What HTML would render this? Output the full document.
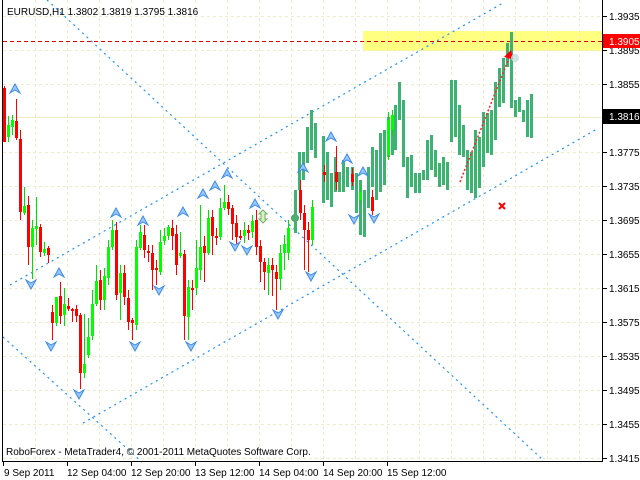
<!DOCTYPE html>
<html><head><meta charset="utf-8"><style>
html,body{margin:0;padding:0;background:#fff;width:640px;height:480px;overflow:hidden}
svg{display:block}
text{font-family:"Liberation Sans",sans-serif;font-size:10px;fill:#000}
</style></head><body>
<svg width="640" height="480" viewBox="0 0 640 480" xmlns="http://www.w3.org/2000/svg" shape-rendering="crispEdges">
<rect width="640" height="480" fill="#fff"/>
<rect x="363" y="31" width="239" height="20" fill="#ffff80"/>
<g stroke="#efebcc" stroke-width="1" stroke-dasharray="3,3">
<line x1="3" y1="16.5" x2="602" y2="16.5"/><line x1="3" y1="50.5" x2="602" y2="50.5"/><line x1="3" y1="84.5" x2="602" y2="84.5"/><line x1="3" y1="152.5" x2="602" y2="152.5"/><line x1="3" y1="186.5" x2="602" y2="186.5"/><line x1="3" y1="220.5" x2="602" y2="220.5"/><line x1="3" y1="254.5" x2="602" y2="254.5"/><line x1="3" y1="288.5" x2="602" y2="288.5"/><line x1="3" y1="322.5" x2="602" y2="322.5"/><line x1="3" y1="356.5" x2="602" y2="356.5"/><line x1="3" y1="390.5" x2="602" y2="390.5"/><line x1="3" y1="424.5" x2="602" y2="424.5"/><line x1="3" y1="458.5" x2="602" y2="458.5"/>
<line x1="35.5" y1="0" x2="35.5" y2="462"/><line x1="67.5" y1="0" x2="67.5" y2="462"/><line x1="99.5" y1="0" x2="99.5" y2="462"/><line x1="131.5" y1="0" x2="131.5" y2="462"/><line x1="163.5" y1="0" x2="163.5" y2="462"/><line x1="195.5" y1="0" x2="195.5" y2="462"/><line x1="227.5" y1="0" x2="227.5" y2="462"/><line x1="259.5" y1="0" x2="259.5" y2="462"/><line x1="291.5" y1="0" x2="291.5" y2="462"/><line x1="323.5" y1="0" x2="323.5" y2="462"/><line x1="355.5" y1="0" x2="355.5" y2="462"/><line x1="387.5" y1="0" x2="387.5" y2="462"/><line x1="419.5" y1="0" x2="419.5" y2="462"/><line x1="451.5" y1="0" x2="451.5" y2="462"/><line x1="483.5" y1="0" x2="483.5" y2="462"/><line x1="515.5" y1="0" x2="515.5" y2="462"/><line x1="547.5" y1="0" x2="547.5" y2="462"/><line x1="579.5" y1="0" x2="579.5" y2="462"/>
</g>
<line x1="3" y1="117.5" x2="602" y2="117.5" stroke="#efebcc"/>
<line x1="3" y1="41.5" x2="602" y2="41.5" stroke="#e00000" stroke-dasharray="4,3"/>
<g stroke="#1e90ff" stroke-width="1.2" stroke-dasharray="2,4" shape-rendering="auto">
<line x1="47" y1="0" x2="543" y2="460"/>
<line x1="3" y1="337" x2="142" y2="462"/>
<line x1="10" y1="285" x2="503" y2="3"/>
<line x1="83" y1="423" x2="597" y2="129"/>
</g>
<g fill="#3cb371">
<rect x="294" y="190" width="3" height="43"/><rect x="298" y="152" width="3" height="38"/><rect x="302" y="152" width="3" height="28"/><rect x="306" y="127" width="3" height="36"/><rect x="310" y="110" width="3" height="40"/><rect x="314" y="123" width="3" height="35"/>
<rect x="322" y="136" width="3" height="67"/><rect x="326" y="152" width="3" height="48"/><rect x="330" y="173" width="3" height="34"/><rect x="334" y="157" width="3" height="35"/><rect x="338" y="172" width="3" height="20"/><rect x="342" y="160" width="3" height="32"/><rect x="346" y="167" width="3" height="20"/><rect x="351" y="167" width="3" height="23"/><rect x="355" y="173" width="3" height="40"/><rect x="359" y="180" width="3" height="55"/><rect x="363" y="190" width="3" height="47"/><rect x="367" y="167" width="3" height="41"/><rect x="371" y="147" width="3" height="40"/><rect x="375" y="150" width="3" height="50"/><rect x="379" y="133" width="3" height="59"/><rect x="383" y="130" width="3" height="55"/><rect x="387" y="117" width="3" height="40"/><rect x="391" y="117" width="3" height="38"/><rect x="394" y="105" width="3" height="45"/><rect x="398" y="82" width="3" height="38"/><rect x="402" y="100" width="3" height="67"/><rect x="406" y="157" width="3" height="41"/><rect x="410" y="155" width="3" height="32"/><rect x="414" y="173" width="3" height="20"/><rect x="418" y="173" width="3" height="20"/><rect x="422" y="170" width="3" height="10"/><rect x="426" y="140" width="3" height="40"/><rect x="430" y="135" width="3" height="35"/><rect x="434" y="150" width="3" height="27"/><rect x="438" y="163" width="3" height="24"/><rect x="442" y="157" width="3" height="28"/><rect x="446" y="162" width="3" height="28"/><rect x="450" y="80" width="3" height="62"/><rect x="454" y="80" width="3" height="57"/><rect x="458" y="105" width="3" height="50"/><rect x="462" y="125" width="3" height="32"/><rect x="466" y="150" width="3" height="40"/><rect x="470" y="152" width="3" height="41"/><rect x="474" y="130" width="3" height="68"/><rect x="478" y="137" width="3" height="51"/><rect x="482" y="112" width="3" height="55"/><rect x="486" y="113" width="3" height="40"/><rect x="490" y="110" width="3" height="45"/><rect x="494" y="82" width="3" height="58"/><rect x="498" y="68" width="3" height="39"/><rect x="502" y="58" width="3" height="45"/><rect x="506" y="43" width="3" height="24"/><rect x="510" y="32" width="3" height="76"/><rect x="514" y="100" width="3" height="17"/><rect x="518" y="97" width="3" height="15"/><rect x="522" y="110" width="3" height="12"/><rect x="526" y="100" width="3" height="37"/><rect x="530" y="94" width="3" height="44"/>
</g>
<g stroke="#ff0000" fill="#ff0000">
<line x1="4.5" y1="86" x2="4.5" y2="142"/><rect x="3" y="88" width="3" height="54" stroke="none"/>
<line x1="16.5" y1="99" x2="16.5" y2="140"/><rect x="15" y="121" width="3" height="17" stroke="none"/>
<line x1="20.5" y1="130" x2="20.5" y2="220"/><rect x="19" y="139" width="3" height="73" stroke="none"/>
<line x1="28.5" y1="196" x2="28.5" y2="265"/><rect x="27" y="205" width="3" height="42" stroke="none"/>
<line x1="40.5" y1="224" x2="40.5" y2="257"/><rect x="39" y="227" width="3" height="25" stroke="none"/>
<line x1="48.5" y1="246" x2="48.5" y2="263"/><rect x="47" y="248" width="3" height="7" stroke="none"/>
<line x1="52.5" y1="305" x2="52.5" y2="340"/><rect x="51" y="312" width="3" height="11" stroke="none"/>
<line x1="60.5" y1="282" x2="60.5" y2="324"/><rect x="59" y="296" width="3" height="20" stroke="none"/>
<line x1="68.5" y1="298" x2="68.5" y2="311"/><rect x="67" y="306" width="3" height="3" stroke="none"/>
<line x1="72.5" y1="308" x2="72.5" y2="322"/><rect x="71" y="309" width="3" height="2" stroke="none"/>
<line x1="76.5" y1="305" x2="76.5" y2="322"/><rect x="75" y="309" width="3" height="7" stroke="none"/>
<line x1="80.5" y1="313" x2="80.5" y2="389"/><rect x="79" y="315" width="3" height="58" stroke="none"/>
<line x1="100.5" y1="270" x2="100.5" y2="310"/><rect x="99" y="280" width="3" height="20" stroke="none"/>
<line x1="116.5" y1="222" x2="116.5" y2="300"/><rect x="115" y="230" width="3" height="65" stroke="none"/>
<line x1="124.5" y1="265" x2="124.5" y2="305"/><rect x="123" y="273" width="3" height="24" stroke="none"/>
<line x1="128.5" y1="290" x2="128.5" y2="330"/><rect x="127" y="298" width="3" height="24" stroke="none"/>
<line x1="132.5" y1="318" x2="132.5" y2="340"/><rect x="131" y="320" width="3" height="3" stroke="none"/>
<line x1="144.5" y1="225" x2="144.5" y2="258"/><rect x="143" y="235" width="3" height="15" stroke="none"/>
<line x1="148.5" y1="245" x2="148.5" y2="262"/><rect x="147" y="251" width="3" height="2" stroke="none"/>
<line x1="152.5" y1="245" x2="152.5" y2="290"/><rect x="151" y="253" width="3" height="17" stroke="none"/>
<line x1="156.5" y1="260" x2="156.5" y2="285"/><rect x="155" y="268" width="3" height="2" stroke="none"/>
<line x1="172.5" y1="220" x2="172.5" y2="250"/><rect x="171" y="228" width="3" height="8" stroke="none"/>
<line x1="176.5" y1="225" x2="176.5" y2="275"/><rect x="175" y="234" width="3" height="31" stroke="none"/>
<line x1="184.5" y1="250" x2="184.5" y2="340"/><rect x="183" y="254" width="3" height="62" stroke="none"/>
<line x1="192.5" y1="280" x2="192.5" y2="310"/><rect x="191" y="288" width="3" height="2" stroke="none"/>
<line x1="204.5" y1="236" x2="204.5" y2="282"/><rect x="203" y="246" width="3" height="7" stroke="none"/>
<line x1="212.5" y1="210" x2="212.5" y2="255"/><rect x="211" y="217" width="3" height="19" stroke="none"/>
<line x1="216.5" y1="228" x2="216.5" y2="245"/><rect x="215" y="236" width="3" height="2" stroke="none"/>
<line x1="228.5" y1="195" x2="228.5" y2="215"/><rect x="227" y="202" width="3" height="7" stroke="none"/>
<line x1="232.5" y1="205" x2="232.5" y2="240"/><rect x="231" y="208" width="3" height="16" stroke="none"/>
<line x1="236.5" y1="215" x2="236.5" y2="245"/><rect x="235" y="223" width="3" height="14" stroke="none"/>
<line x1="240.5" y1="230" x2="240.5" y2="240"/><rect x="239" y="236" width="3" height="2" stroke="none"/>
<line x1="248.5" y1="225" x2="248.5" y2="240"/><rect x="247" y="230" width="3" height="3" stroke="none"/>
<line x1="256.5" y1="210" x2="256.5" y2="255"/><rect x="255" y="220" width="3" height="27" stroke="none"/>
<line x1="260.5" y1="240" x2="260.5" y2="282"/><rect x="259" y="246" width="3" height="16" stroke="none"/>
<line x1="264.5" y1="258" x2="264.5" y2="290"/><rect x="263" y="262" width="3" height="10" stroke="none"/>
<line x1="272.5" y1="258" x2="272.5" y2="296"/><rect x="271" y="265" width="3" height="5" stroke="none"/>
<line x1="276.5" y1="265" x2="276.5" y2="310"/><rect x="275" y="272" width="3" height="7" stroke="none"/>
<line x1="300.5" y1="180" x2="300.5" y2="220"/><rect x="299" y="190" width="3" height="23" stroke="none"/>
<line x1="304.5" y1="205" x2="304.5" y2="270"/><rect x="303" y="213" width="3" height="17" stroke="none"/>
<line x1="308.5" y1="222" x2="308.5" y2="272"/><rect x="307" y="230" width="3" height="10" stroke="none"/>
<line x1="324.5" y1="165" x2="324.5" y2="182"/><rect x="323" y="172" width="3" height="3" stroke="none"/>
<line x1="336.5" y1="146" x2="336.5" y2="190"/><rect x="335" y="172" width="3" height="10" stroke="none"/>
<line x1="352.5" y1="168" x2="352.5" y2="186"/><rect x="351" y="174" width="3" height="8" stroke="none"/>
<line x1="372.5" y1="190" x2="372.5" y2="215"/><rect x="371" y="197" width="3" height="14" stroke="none"/>
</g>
<g stroke="#00e000" fill="#00ff00">
<line x1="8.5" y1="116" x2="8.5" y2="142"/><rect x="7" y="125" width="3" height="12" stroke="none"/>
<line x1="12.5" y1="115" x2="12.5" y2="135"/><rect x="11" y="120" width="3" height="7" stroke="none"/>
<line x1="24.5" y1="187" x2="24.5" y2="215"/><rect x="23" y="206" width="3" height="7" stroke="none"/>
<line x1="32.5" y1="220" x2="32.5" y2="279"/><rect x="31" y="228" width="3" height="19" stroke="none"/>
<line x1="36.5" y1="197" x2="36.5" y2="245"/><rect x="35" y="226" width="3" height="3" stroke="none"/>
<line x1="44.5" y1="242" x2="44.5" y2="256"/><rect x="43" y="249" width="3" height="4" stroke="none"/>
<line x1="56.5" y1="297" x2="56.5" y2="326"/><rect x="55" y="297" width="3" height="26" stroke="none"/>
<line x1="64.5" y1="288" x2="64.5" y2="326"/><rect x="63" y="304" width="3" height="11" stroke="none"/>
<line x1="84.5" y1="314" x2="84.5" y2="378"/><rect x="83" y="364" width="3" height="9" stroke="none"/>
<line x1="88.5" y1="318" x2="88.5" y2="358"/><rect x="87" y="337" width="3" height="18" stroke="none"/>
<line x1="92.5" y1="290" x2="92.5" y2="340"/><rect x="91" y="304" width="3" height="32" stroke="none"/>
<line x1="96.5" y1="265" x2="96.5" y2="306"/><rect x="95" y="281" width="3" height="23" stroke="none"/>
<line x1="104.5" y1="268" x2="104.5" y2="310"/><rect x="103" y="276" width="3" height="24" stroke="none"/>
<line x1="108.5" y1="240" x2="108.5" y2="285"/><rect x="107" y="247" width="3" height="31" stroke="none"/>
<line x1="112.5" y1="220" x2="112.5" y2="250"/><rect x="111" y="230" width="3" height="17" stroke="none"/>
<line x1="120.5" y1="265" x2="120.5" y2="320"/><rect x="119" y="273" width="3" height="20" stroke="none"/>
<line x1="136.5" y1="240" x2="136.5" y2="330"/><rect x="135" y="247" width="3" height="78" stroke="none"/>
<line x1="140.5" y1="225" x2="140.5" y2="250"/><rect x="139" y="232" width="3" height="16" stroke="none"/>
<line x1="160.5" y1="230" x2="160.5" y2="275"/><rect x="159" y="242" width="3" height="30" stroke="none"/>
<line x1="164.5" y1="228" x2="164.5" y2="245"/><rect x="163" y="236" width="3" height="5" stroke="none"/>
<line x1="168.5" y1="225" x2="168.5" y2="240"/><rect x="167" y="227" width="3" height="9" stroke="none"/>
<line x1="180.5" y1="232" x2="180.5" y2="258"/><rect x="179" y="253" width="3" height="3" stroke="none"/>
<line x1="188.5" y1="280" x2="188.5" y2="340"/><rect x="187" y="287" width="3" height="30" stroke="none"/>
<line x1="196.5" y1="240" x2="196.5" y2="295"/><rect x="195" y="268" width="3" height="20" stroke="none"/>
<line x1="200.5" y1="205" x2="200.5" y2="280"/><rect x="199" y="247" width="3" height="23" stroke="none"/>
<line x1="208.5" y1="210" x2="208.5" y2="255"/><rect x="207" y="218" width="3" height="35" stroke="none"/>
<line x1="220.5" y1="198" x2="220.5" y2="240"/><rect x="219" y="208" width="3" height="29" stroke="none"/>
<line x1="224.5" y1="185" x2="224.5" y2="210"/><rect x="223" y="202" width="3" height="6" stroke="none"/>
<line x1="244.5" y1="222" x2="244.5" y2="243"/><rect x="243" y="230" width="3" height="6" stroke="none"/>
<line x1="252.5" y1="215" x2="252.5" y2="238"/><rect x="251" y="221" width="3" height="11" stroke="none"/>
<line x1="268.5" y1="258" x2="268.5" y2="295"/><rect x="267" y="265" width="3" height="8" stroke="none"/>
<line x1="280.5" y1="245" x2="280.5" y2="290"/><rect x="279" y="253" width="3" height="26" stroke="none"/>
<line x1="284.5" y1="235" x2="284.5" y2="270"/><rect x="283" y="244" width="3" height="9" stroke="none"/>
<line x1="288.5" y1="220" x2="288.5" y2="260"/><rect x="287" y="228" width="3" height="25" stroke="none"/>
<line x1="312.5" y1="200" x2="312.5" y2="245"/><rect x="311" y="207" width="3" height="33" stroke="none"/>
<line x1="360.5" y1="185" x2="360.5" y2="205"/><rect x="359" y="192" width="3" height="8" stroke="none"/>
<line x1="388.5" y1="112" x2="388.5" y2="160"/><rect x="387" y="120" width="3" height="35" stroke="none"/>
<line x1="392.5" y1="110" x2="392.5" y2="135"/><rect x="391" y="115" width="3" height="15" stroke="none"/>
</g>
<g fill="#9cc8ff" stroke="#3a8ae8" stroke-width="1" shape-rendering="auto">
<path d="M15 84 L10 93 L15 90 L20 93 Z"/><path d="M116 208 L111 217 L116 214 L121 217 Z"/><path d="M143 216 L138 225 L143 222 L148 225 Z"/><path d="M59 268 L54 277 L59 274 L64 277 Z"/><path d="M183 207 L178 216 L183 213 L188 216 Z"/><path d="M203 189 L198 198 L203 195 L208 198 Z"/><path d="M215 181 L210 190 L215 187 L220 190 Z"/><path d="M227 169 L222 178 L227 175 L232 178 Z"/><path d="M255 199 L250 208 L255 205 L260 208 Z"/><path d="M303 163 L298 172 L303 169 L308 172 Z"/><path d="M331 132 L326 141 L331 138 L336 141 Z"/><path d="M347 154 L342 163 L347 160 L352 163 Z"/><path d="M363 167 L358 176 L363 173 L368 176 Z"/>
<path d="M31 289 L26 280 L31 283 L36 280 Z"/><path d="M51 351 L46 342 L51 345 L56 342 Z"/><path d="M79 399 L74 390 L79 393 L84 390 Z"/><path d="M135 351 L130 342 L135 345 L140 342 Z"/><path d="M191 351 L186 342 L191 345 L196 342 Z"/><path d="M159 295 L154 286 L159 289 L164 286 Z"/><path d="M235 251 L230 242 L235 245 L240 242 Z"/><path d="M247 255 L242 246 L247 249 L252 246 Z"/><path d="M278 319 L273 310 L278 313 L283 310 Z"/><path d="M311 281 L306 272 L311 275 L316 272 Z"/><path d="M354 224 L349 215 L354 218 L359 215 Z"/><path d="M374 223 L369 214 L374 217 L379 214 Z"/>
</g>
<circle cx="295" cy="218" r="4" fill="#4caf70"/>
<path d="M263 210 L259 214 L261 214 L261 219 L259 219 L263 223 L267 219 L265 219 L265 214 L267 214 Z" fill="#d8f0c8" stroke="#6ab060" shape-rendering="auto"/>
<line x1="460" y1="182" x2="509" y2="58" stroke="#ff2020" stroke-width="1.5" stroke-dasharray="2,2" shape-rendering="auto"/>
<path d="M511 50 L504 57 L513 59 Z" fill="#ff0000" shape-rendering="auto"/>
<circle cx="515" cy="58" r="4" fill="#c8dde0" opacity="0.8"/>
<path d="M499 203 L505 209 M505 203 L499 209" stroke="#ff0000" stroke-width="2" shape-rendering="auto"/>
<line x1="2.5" y1="0" x2="2.5" y2="462" stroke="#000"/>
<line x1="602.5" y1="0" x2="602.5" y2="462" stroke="#000"/>
<line x1="2" y1="461.5" x2="603" y2="461.5" stroke="#000"/>
<g stroke="#000">
<line x1="603" y1="16.5" x2="607" y2="16.5"/><line x1="603" y1="50.5" x2="607" y2="50.5"/><line x1="603" y1="84.5" x2="607" y2="84.5"/><line x1="603" y1="152.5" x2="607" y2="152.5"/><line x1="603" y1="186.5" x2="607" y2="186.5"/><line x1="603" y1="220.5" x2="607" y2="220.5"/><line x1="603" y1="254.5" x2="607" y2="254.5"/><line x1="603" y1="288.5" x2="607" y2="288.5"/><line x1="603" y1="322.5" x2="607" y2="322.5"/><line x1="603" y1="356.5" x2="607" y2="356.5"/><line x1="603" y1="390.5" x2="607" y2="390.5"/><line x1="603" y1="424.5" x2="607" y2="424.5"/><line x1="603" y1="458.5" x2="607" y2="458.5"/>
<line x1="3.5" y1="462" x2="3.5" y2="466"/><line x1="67.5" y1="462" x2="67.5" y2="466"/><line x1="131.5" y1="462" x2="131.5" y2="466"/><line x1="195.5" y1="462" x2="195.5" y2="466"/><line x1="259.5" y1="462" x2="259.5" y2="466"/><line x1="323.5" y1="462" x2="323.5" y2="466"/><line x1="387.5" y1="462" x2="387.5" y2="466"/>
</g>
<text x="609" y="20">1.3935</text><text x="609" y="54">1.3895</text><text x="609" y="88">1.3855</text><text x="609" y="156">1.3775</text><text x="609" y="190">1.3735</text><text x="609" y="224">1.3695</text><text x="609" y="258">1.3655</text><text x="609" y="292">1.3615</text><text x="609" y="326">1.3575</text><text x="609" y="360">1.3535</text><text x="609" y="394">1.3495</text><text x="609" y="428">1.3455</text><text x="609" y="462">1.3415</text>
<rect x="603" y="34" width="37" height="14" fill="#ff0000"/>
<text x="609" y="45" style="fill:#fff">1.3905</text>
<rect x="603" y="109" width="37" height="15" fill="#000"/>
<text x="609" y="120" style="fill:#fff">1.3816</text>
<text x="4" y="476">9 Sep 2011</text><text x="67" y="476">12 Sep 04:00</text><text x="131" y="476">12 Sep 20:00</text><text x="195" y="476">13 Sep 12:00</text><text x="259" y="476">14 Sep 04:00</text><text x="323" y="476">14 Sep 20:00</text><text x="387" y="476">15 Sep 12:00</text>
<text x="7" y="15">EURUSD,H1  1.3802 1.3819 1.3795 1.3816</text>
<text x="6" y="455">RoboForex - MetaTrader4, © 2001-2011 MetaQuotes Software Corp.</text>
</svg>
</body></html>
